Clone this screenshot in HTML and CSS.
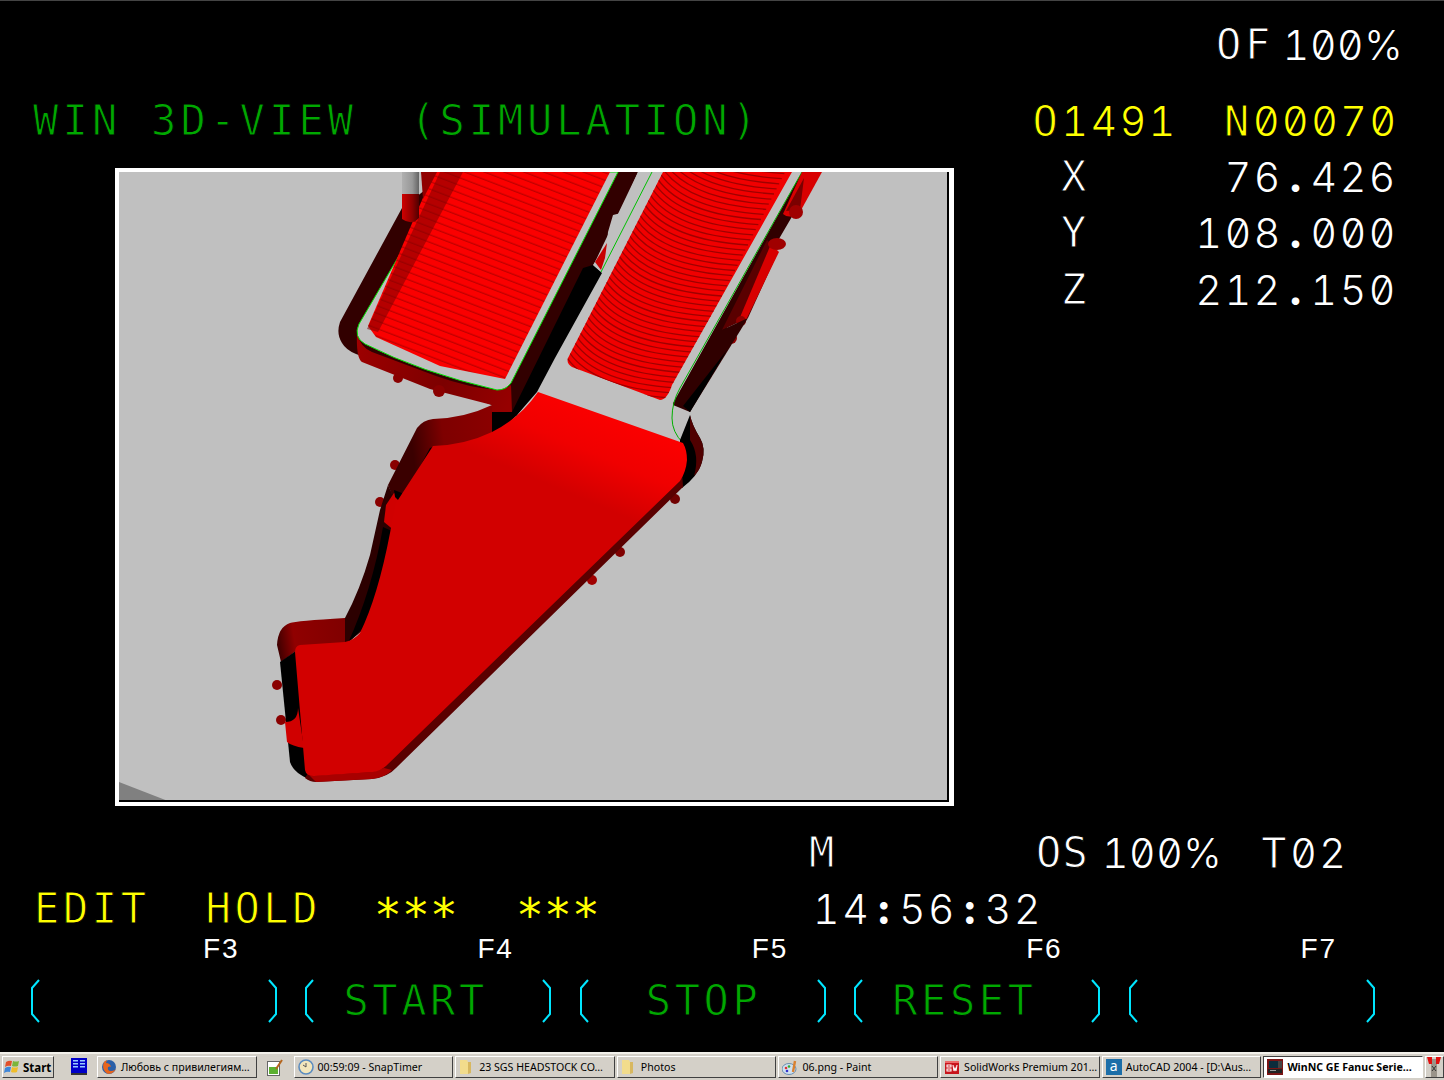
FILE: index.html
```html
<!DOCTYPE html>
<html lang="en">
<head>
    <meta charset="UTF-8">
    <title>WinNC GE Fanuc Series</title>
    <link rel="stylesheet" href="styles.css">
</head>
<body>

    <div class="screen">
        <div class="line line-top">
            <span class="white of-label">OF</span><span class="white of-value num">100%</span>
        </div>

        <div class="line line-title">
            <span class="green title">WIN 3D-VIEW</span><span class="green title-sub">(SIMULATION)</span>
            <span class="yellow prog">O<span class="num">1491</span></span><span class="yellow block">N<span class="num">00070</span></span>
        </div>

        <div class="middle">
            <div class="viewport">
                <svg class="sim" viewBox="119 172 828 628" width="828" height="628">
                    <defs>
                        <linearGradient id="floorGrad" gradientUnits="userSpaceOnUse" x1="625" y1="405" x2="585" y2="500">
                            <stop offset="0" stop-color="#ff0000"/>
                            <stop offset="0.55" stop-color="#f00000"/>
                            <stop offset="1" stop-color="#d20000"/>
                        </linearGradient>
                        <linearGradient id="wallBottom" gradientUnits="userSpaceOnUse" x1="350" y1="340" x2="510" y2="400">
                            <stop offset="0" stop-color="#a00000"/>
                            <stop offset="0.6" stop-color="#7c0000"/>
                            <stop offset="1" stop-color="#960000"/>
                        </linearGradient>
                        <linearGradient id="neckWall" gradientUnits="userSpaceOnUse" x1="410" y1="430" x2="490" y2="420">
                            <stop offset="0" stop-color="#3a0000"/>
                            <stop offset="0.4" stop-color="#7e0000"/>
                            <stop offset="1" stop-color="#8a0000"/>
                        </linearGradient>
                        <linearGradient id="stepWall" gradientUnits="userSpaceOnUse" x1="277" y1="640" x2="345" y2="630">
                            <stop offset="0" stop-color="#400000"/>
                            <stop offset="0.25" stop-color="#900000"/>
                            <stop offset="1" stop-color="#800000"/>
                        </linearGradient>
                        <linearGradient id="toolGrey" x1="0" y1="0" x2="1" y2="0">
                            <stop offset="0" stop-color="#b0b0b0"/>
                            <stop offset="0.6" stop-color="#989898"/>
                            <stop offset="1" stop-color="#646464"/>
                        </linearGradient>
                        <linearGradient id="toolRed" x1="0" y1="0" x2="1" y2="0">
                            <stop offset="0" stop-color="#d00000"/>
                            <stop offset="0.6" stop-color="#900000"/>
                            <stop offset="1" stop-color="#500000"/>
                        </linearGradient>
                        <!-- straight ribs of the left pocket -->
                        <pattern id="ribsFlat" patternUnits="userSpaceOnUse" width="40" height="7.1" patternTransform="rotate(21 440 270)">
                            <rect width="40" height="7.1" fill="#fa0000"/>
                            <rect y="5.8" width="40" height="1.3" fill="#c00000"/>
                        </pattern>
                        <clipPath id="roundPocket">
                            <path d="M663,172 L792,172 L672,385 Q667,400 660,400 L572,367 Q566,363 568,358 Z"/>
                        </clipPath>
                    </defs>

                    <!-- stock corner -->
                    <polygon points="119,782 168,801 119,801" fill="#808080"/>

                    <!-- outer walls, left pocket -->
                    <path d="M402,208 L340,322 Q336,334 342,343 Q346,350 356,354 L492,405 L492,432 L517,415 L530,398 L638,172 L448,172 Z" fill="#320000"/>
                    <path d="M357,333 Q360,347 372,352 L436,376 Q470,388 497,390 Q506,389 511,385 L512,412 L492,422 L492,405 L430,389 L362,362 Q356,358 357,333 Z" fill="url(#wallBottom)"/>
                    <polygon points="583,268 593,265 602,273 555,358 537,392 517,415 492,432 492,422 512,412" fill="#000"/>
                    <circle cx="398" cy="378" r="5" fill="#8a0000"/>
                    <circle cx="439" cy="391" r="6" fill="#8a0000"/>
                    <!-- green contour, left pocket -->
                    <path d="M448,172 L359,324 Q353,337 365,344 Q420,372 497,390 Q506,390 511,383 L618,172 Z" fill="#c0c0c0" stroke="#00e000" stroke-width="1"/>
                    <path d="M434,172 L368,326 L376,337 L440,366 L505,379 L610,172 Z" fill="url(#ribsFlat)"/>
                    <path d="M463,172 L378,332 L367,329 L440,172 Z" fill="#7c0000" opacity="0.55"/>

                    <!-- outer walls, right pocket -->
                    <polygon points="802,172 818,172 720,340 700,372 690,412 673,405 672,380" fill="#300000"/>
                    <!-- strip between the pockets -->
                    <polygon points="638,172 652,172 605,275 593,265 607,243 608,232 613,215 625,212 625,202" fill="#c0c0c0"/>
                    <polygon points="595,262 607,243 605,258 601,270" fill="#c80000"/>
                    <path d="M652,172 L601,272" stroke="#00c000" stroke-width="1" fill="none"/>
                    <!-- grey floor of the right pocket -->
                    <polygon points="660,172 802,172 672,405 672,430 683,443 538,392 552,368 609,275" fill="#c0c0c0"/>
                    <path d="M802,172 L680,388 Q672,402 672,418 Q672,432 683,443" stroke="#00b000" stroke-width="1" fill="none"/>
                    <!-- curved ribs of the right pocket -->
                    <g clip-path="url(#roundPocket)">
                        <rect x="560" y="172" width="240" height="230" fill="#f00000"/>
                        <path class="ribs" d="M567,358 q25,35 103,40 m-100.4,-45.1 q25,35 103,40 m-100.4,-45.1 q25,35 103,40 m-100.4,-45.1 q25,35 103,40 m-100.4,-45.1 q25,35 103,40 m-100.4,-45.1 q25,35 103,40 m-100.4,-45.1 q25,35 103,40 m-100.4,-45.1 q25,35 103,40 m-100.4,-45.1 q25,35 103,40 m-100.4,-45.1 q25,35 103,40 m-100.4,-45.1 q25,35 103,40 m-100.4,-45.1 q25,35 103,40 m-100.4,-45.1 q25,35 103,40 m-100.4,-45.1 q25,35 103,40 m-100.4,-45.1 q25,35 103,40 m-100.4,-45.1 q25,35 103,40 m-100.4,-45.1 q25,35 103,40 m-100.4,-45.1 q25,35 103,40 m-100.4,-45.1 q25,35 103,40 m-100.4,-45.1 q25,35 103,40 m-100.4,-45.1 q25,35 103,40 m-100.4,-45.1 q25,35 103,40 m-100.4,-45.1 q25,35 103,40 m-100.4,-45.1 q25,35 103,40 m-100.4,-45.1 q25,35 103,40 m-100.4,-45.1 q25,35 103,40 m-100.4,-45.1 q25,35 103,40 m-100.4,-45.1 q25,35 103,40 m-100.4,-45.1 q25,35 103,40 m-100.4,-45.1 q25,35 103,40 m-100.4,-45.1 q25,35 103,40 m-100.4,-45.1 q25,35 103,40 m-100.4,-45.1 q25,35 103,40 m-100.4,-45.1 q25,35 103,40 m-100.4,-45.1 q25,35 103,40 m-100.4,-45.1 q25,35 103,40 m-100.4,-45.1 q25,35 103,40 m-100.4,-45.1 q25,35 103,40 m-100.4,-45.1 q25,35 103,40 m-100.4,-45.1 q25,35 103,40 m-100.4,-45.1 q25,35 103,40 m-100.4,-45.1 q25,35 103,40 m-100.4,-45.1 q25,35 103,40 m-100.4,-45.1 q25,35 103,40 m-100.4,-45.1 q25,35 103,40 m-100.4,-45.1 q25,35 103,40"/>
                    </g>

                    <!-- grooves on the right wall -->
                    <path d="M802,172 L822,172 L800,212 Q790,220 783,214 Z" fill="#d80000"/>
                    <path d="M786,211 L804,178 L800,210 Z" fill="#7a0000"/>
                    <circle cx="796" cy="212" r="7" fill="#a00000"/>
                    <polygon points="767,240 722,330 748,318 778,252" fill="#5a0000"/>
                    <polygon points="771,244 779,252 746,320 738,322" fill="#d80000"/>
                    <ellipse cx="777" cy="244" rx="9" ry="6" fill="#a00000"/>
                    <circle cx="741" cy="321" r="5" fill="#900000"/>
                    <circle cx="731" cy="338" r="6" fill="#900000"/>
                    <polygon points="722,330 748,318 690,412 680,400" fill="#300000"/>
                    <polygon points="727,350 690,412 683,406" fill="#000"/>
                    <path d="M690,415 Q692,425 700,438 Q706,448 702,462 Q698,476 682,488 L680,455 Q680,447 680,440 Z" fill="#000"/>
                    <path d="M690,415 Q692,425 700,438 Q706,448 702,462 Q700,470 694,476 Q700,455 690,440 Z" fill="#500000"/>

                    <!-- neck wall above the big floor -->
                    <circle cx="395" cy="465" r="5" fill="#8a0000"/>
                    <circle cx="380" cy="502" r="5" fill="#8a0000"/>
                    <path d="M388,485 L417,428 Q423,420 433,419 Q465,418 492,405 L492,442 Q465,453 435,454 L412,485 L396,505 Z" fill="url(#neckWall)"/>
                    <polygon points="492,412 512,412 517,415 492,440" fill="#000"/>
                    <polygon points="430,448 410,485 400,500 406,503 436,446" fill="#000"/>
                    <!-- left edge of the big floor -->
                    <path d="M388,485 L380,510 L370,555 Q360,590 345,618 L345,645 L375,620 L400,533 L395,500 Z" fill="#2c0000"/>
                    <path d="M348,643 L366,625 L396,533 L383,527 Q372,590 348,643 Z" fill="#000"/>
                    <path d="M394,493 L386,505 L384,522 L396,532 L410,500 Z" fill="#d00000"/>
                    <polygon points="395,497 394,490 402,493 403,505" fill="#000"/>

                    <!-- step wall at the lower left -->
                    <circle cx="277" cy="685" r="5" fill="#8a0000"/>
                    <circle cx="281" cy="720" r="5" fill="#8a0000"/>
                    <path d="M277,645 Q278,627 290,623 Q296,621 345,618 L345,645 L300,648 L281,662 Z" fill="url(#stepWall)"/>
                    <path d="M280,662 L300,648 L312,780 Q294,774 290,762 Z" fill="#000"/>
                    <path d="M285,722 Q298,722 298,708 L304,748 Q292,746 287,742 Z" fill="#d00000"/>

                    <!-- lip along the big floor -->
                    <circle cx="620" cy="552" r="5" fill="#800000"/>
                    <circle cx="592" cy="580" r="5" fill="#a00000"/>
                    <circle cx="675" cy="499" r="5" fill="#700000"/>
                    <path d="M683,487 L396,768 Q388,777 372,779 L316,782 Q310,782 305,778 L310,770 L372,766 L383,760 L682,472 Z" fill="#5a0000"/>
                    <path d="M310,776 L372,772 L384,768 L392,770 Q386,777 372,779 L316,782 Z" fill="#a80000"/>

                    <!-- big floor -->
                    <path d="M538,392 L683,443 Q687,450 687,460 Q686,472 680,481 L386,766 Q380,771 373,772 L314,776 Q306,776 305,770 L295,652 Q295,646 300,645 L345,642 Q354,640 360,633 Q378,596 390,533 L396,503 L433,446 Q465,445 492,432 Q520,418 538,392 Z" fill="url(#floorGrad)"/>

                    <!-- tool -->
                    <rect x="402" y="172" width="17" height="22" fill="url(#toolGrey)"/>
                    <path d="M402,194 H419 V218 Q412,226 402,219 Z" fill="url(#toolRed)"/>
                    <path d="M421,172 H437 L423,199 Z" fill="#900000"/>
                </svg>
            </div>
            <div class="readout">
                <div class="axis"><span>X</span><span class="num">76<span class="sep">.</span>426</span></div>
                <div class="axis"><span>Y</span><span class="num">108<span class="sep">.</span>000</span></div>
                <div class="axis"><span>Z</span><span class="num">212<span class="sep">.</span>150</span></div>
            </div>
        </div>

        <div class="line line-mode">
            <span class="white mode-m">M</span><span class="white mode-os">OS</span><span class="white mode-pct num">100%</span><span class="white mode-tool">T<span class="num">02</span></span>
        </div>

        <div class="line line-status">
            <span class="yellow st-edit">EDIT</span><span class="yellow st-hold">HOLD</span><span class="yellow stars st-star">***</span><span class="yellow stars st-star2">***</span><span class="white st-time num">14<span class="sep">:</span>56<span class="sep">:</span>32</span>
        </div>

        <div class="fkeys">
            <span>F3</span><span>F4</span><span>F5</span><span>F6</span><span>F7</span>
        </div>

        <div class="softkeys">
            <div class="softkey">
                <svg class="bracket" viewBox="0 0 9 44" width="9" height="44"><path d="M8,1 L1,9 V35 L8,43"/></svg>
                <span class="softkey-label"></span>
                <svg class="bracket" viewBox="0 0 9 44" width="9" height="44"><path d="M1,1 L8,9 V35 L1,43"/></svg>
            </div>
            <div class="softkey">
                <svg class="bracket" viewBox="0 0 9 44" width="9" height="44"><path d="M8,1 L1,9 V35 L8,43"/></svg>
                <span class="softkey-label">START</span>
                <svg class="bracket" viewBox="0 0 9 44" width="9" height="44"><path d="M1,1 L8,9 V35 L1,43"/></svg>
            </div>
            <div class="softkey">
                <svg class="bracket" viewBox="0 0 9 44" width="9" height="44"><path d="M8,1 L1,9 V35 L8,43"/></svg>
                <span class="softkey-label label-stop">STOP</span>
                <svg class="bracket" viewBox="0 0 9 44" width="9" height="44"><path d="M1,1 L8,9 V35 L1,43"/></svg>
            </div>
            <div class="softkey">
                <svg class="bracket" viewBox="0 0 9 44" width="9" height="44"><path d="M8,1 L1,9 V35 L8,43"/></svg>
                <span class="softkey-label">RESET</span>
                <svg class="bracket" viewBox="0 0 9 44" width="9" height="44"><path d="M1,1 L8,9 V35 L1,43"/></svg>
            </div>
            <div class="softkey">
                <svg class="bracket" viewBox="0 0 9 44" width="9" height="44"><path d="M8,1 L1,9 V35 L8,43"/></svg>
                <span class="softkey-label"></span>
                <svg class="bracket" viewBox="0 0 9 44" width="9" height="44"><path d="M1,1 L8,9 V35 L1,43"/></svg>
            </div>
        </div>
    </div>

    <div class="taskbar">
        <div class="task start">
            <svg width="18" height="16" viewBox="0 0 18 16"><path d="M2,3 Q5,1 8,2 L7,7 Q4,6 1,8 Z" fill="#e2502a"/><path d="M9,2 Q12,3 15,2 L14,7 Q11,8 8,7 Z" fill="#7cb53a"/><path d="M1,9 Q4,7 7,8 L6,13 Q3,12 0,14 Z" fill="#3f86d8"/><path d="M8,8 Q11,9 14,8 L13,13 Q10,14 7,13 Z" fill="#f0bd2a"/></svg>
            <span>Start</span>
        </div>
        <div class="quick ql-book">
            <svg width="16" height="18" viewBox="0 0 16 18"><rect x="0" y="0" width="16" height="15" fill="#0000c8"/><rect x="2" y="2" width="5" height="1.5" fill="#9cf"/><rect x="2" y="5" width="5" height="1.5" fill="#9cf"/><rect x="2" y="8" width="5" height="1.5" fill="#9cf"/><rect x="9" y="2" width="5" height="1.5" fill="#9cf"/><rect x="9" y="5" width="5" height="1.5" fill="#9cf"/><rect x="9" y="8" width="5" height="1.5" fill="#9cf"/><rect x="0" y="15" width="16" height="2" fill="#333"/></svg>
        </div>
        <div class="task">
            <svg width="16" height="16" viewBox="0 0 16 16"><circle cx="8" cy="8" r="7" fill="#2a5fa8"/><path d="M3,3 Q0,10 6,14.5 Q12,16 15.5,9 Q14,12 10,12 Q6,12 7,8 Q9,7 10,8 Q9,4 5,4 L6,1 Q4,2 3,3 Z" fill="#e8651c"/></svg>
            <span>Любовь с привилегиям…</span>
        </div>
        <div class="quick ql-note">
            <svg width="17" height="17" viewBox="0 0 17 17"><rect x="0.5" y="2.5" width="12" height="14" fill="#fff" stroke="#666"/><rect x="2" y="8" width="9" height="7" fill="#5cb030"/><path d="M9,10 L15,1" stroke="#b5651d" stroke-width="2"/></svg>
        </div>
        <div class="task">
            <svg width="16" height="16" viewBox="0 0 16 16"><circle cx="8" cy="8" r="7" fill="#f3e6bc" stroke="#5b8cc0" stroke-width="1.6"/><path d="M8,4 V8 L5,6" stroke="#555" stroke-width="1" fill="none"/></svg>
            <span>00:59:09 - SnapTimer</span>
        </div>
        <div class="task">
            <svg width="16" height="16" viewBox="0 0 16 16"><path d="M1,1 H8 L9,3 V15 H1 Z" fill="#f2dc8c"/><path d="M9,3 H12 V14 L9,15 Z" fill="#d8b860"/></svg>
            <span>23 SGS HEADSTOCK CO…</span>
        </div>
        <div class="task">
            <svg width="16" height="16" viewBox="0 0 16 16"><path d="M1,1 H8 L9,3 V15 H1 Z" fill="#f2dc8c"/><path d="M9,3 H12 V14 L9,15 Z" fill="#d8b860"/></svg>
            <span>Photos</span>
        </div>
        <div class="task">
            <svg width="16" height="16" viewBox="0 0 16 16"><ellipse cx="7" cy="10" rx="7" ry="5.5" fill="#cfe0f0" stroke="#6a8fb0"/><circle cx="4" cy="9" r="1.3" fill="#d33"/><circle cx="7" cy="7.5" r="1.3" fill="#3a3"/><circle cx="5" cy="12" r="1.3" fill="#33c"/><path d="M11,13 L13,2" stroke="#d98030" stroke-width="2.4"/></svg>
            <span>06.png - Paint</span>
        </div>
        <div class="task">
            <svg width="16" height="16" viewBox="0 0 16 16"><rect x="1" y="2" width="14" height="13" fill="#c8141c"/><rect x="1" y="2" width="14" height="2" fill="#ee6a6a"/><path d="M3,6 H7 V8 H3 Z M3,10 H7 V12 H3 Z M9,6 L10,12 L11,9 L12,12 L13,6" fill="none" stroke="#fff" stroke-width="1.1"/></svg>
            <span>SolidWorks Premium 201…</span>
        </div>
        <div class="task">
            <div class="acad-icon">a</div>
            <span>AutoCAD 2004 - [D:\Aus…</span>
        </div>
        <div class="task active">
            <svg width="16" height="16" viewBox="0 0 16 16"><rect width="16" height="16" fill="#7a1414"/><rect x="2" y="2" width="9" height="7" fill="#0c2c3c"/><rect x="11" y="2" width="4" height="7" fill="#444"/><rect x="1" y="10" width="14" height="4" fill="#222"/><rect x="3" y="11" width="6" height="1" fill="#9a9a9a"/></svg>
            <span>WinNC GE Fanuc Serie…</span>
        </div>
        <div class="task tail">
            <svg width="14" height="20" viewBox="0 0 14 20"><rect x="4" y="2" width="6" height="18" fill="#9a948a"/><path d="M0,0 H5 V7 H2 Z M9,0 H14 L12,7 H9 Z" fill="#e01010"/><path d="M5,9 L9,14 M9,9 L5,14" stroke="#333"/></svg>
        </div>
    </div>

</body>
</html>
```

FILE: styles.css
```css
/* Basic reset and body styling */
* {
    margin: 0;
    padding: 0;
    box-sizing: border-box;
}

body {
    width: 1444px;
    height: 1080px;
    background-color: #000;
    overflow: hidden;
    font-family: 'DejaVu Sans Mono', monospace;
}

/* CNC screen, one text grid on black */
.screen {
    height: 1052px;
    border-top: 1px solid #444;
    font-size: 42px;
    letter-spacing: 3.6px;
    -webkit-text-stroke: 1px #000;
}

.line {
    display: flex;
    white-space: pre;
    line-height: 40px;
    height: 40px;
}

.white { color: #fff; }
.yellow { color: #ffff00; }
.green { color: #00a800; }

/* Digit runs: thin face with the slashed zero of the real screen */
.num {
    font-family: 'Inter', sans-serif;
    font-weight: 300;
    font-size: 41px;
    letter-spacing: 2.6px;
    font-feature-settings: "zero", "tnum";
    -webkit-text-stroke: 0;
}

/* Dots and colons sit in a full cell and are heavy */
.sep {
    font-weight: 800;
    margin: 0 7px;
}

/* Top rows */
.line-top {
    margin-top: 24px;
    padding-left: 1216px;
}

.of-value { margin-left: 9px; letter-spacing: 0.6px; }

.line-title { margin-top: 36px; padding-left: 33px; }
.title { letter-spacing: 4.2px; }
.title-sub { margin-left: 53px; letter-spacing: 3.9px; }
.prog { margin-left: 272px; }
.block { margin-left: 46px; }

/* Viewport and axis readouts */
.middle {
    display: flex;
    margin-top: 27px;
    height: 638px;
}

.viewport {
    margin-left: 115px;
    width: 839px;
    height: 638px;
    background-color: #fff;
    padding: 4px 5px 4px 4px;
}

.sim {
    display: block;
    box-sizing: content-box;
    background-color: #c0c0c0;
    border-right: 2px solid #000;
    border-bottom: 2px solid #000;
}

.ribs {
    fill: none;
    stroke: #a00000;
    stroke-width: 1.3;
}

.readout {
    width: 340px;
    margin-left: 107px;
    margin-top: -11px;
}

.axis {
    display: flex;
    justify-content: space-between;
    color: #fff;
    height: 56.4px;
    line-height: 40px;
    width: 337px;
}

/* Status rows */
.line-mode { margin-top: 27px; padding-left: 809px; }
.mode-os { margin-left: 198px; letter-spacing: 1.2px; }
.mode-pct { margin-left: 13px; letter-spacing: 0.6px; }
.mode-tool { margin-left: 39px; }

.line-status { margin-top: 16px; padding-left: 34px; }
.st-hold { margin-left: 56px; }
.stars {
    font-size: 46px;
    letter-spacing: 0.3px;
    margin-top: 6px;
    -webkit-text-stroke: 0;
}
.st-star { margin-left: 53px; }
.st-star2 { margin-left: 58px; }
.st-time { margin-left: 213px; }

/* Function key row */
.fkeys {
    display: flex;
    margin-top: 5px;
    padding-left: 203px;
    font-family: 'Liberation Sans', sans-serif;
    font-size: 28px;
    letter-spacing: 1.8px;
    line-height: 30px;
    height: 30px;
    color: #fff;
    -webkit-text-stroke: 0;
}

.fkeys span {
    flex: 0 0 274.4px;
}

.fkeys span:last-child {
    flex: none;
}

/* Soft keys, brackets around the green label */
.softkeys {
    display: flex;
    margin-top: 15px;
    padding-left: 31px;
    gap: 28.4px;
}

.softkey {
    display: flex;
    align-items: center;
    width: 246px;
    height: 44px;
}

.softkey-label {
    flex: 1;
    padding-left: 29px;
    color: #00a800;
    line-height: 44px;
    white-space: pre;
}

.label-stop { padding-left: 57px; }

.bracket {
    flex: 0 0 9px;
    fill: none;
    stroke: #00e6ff;
    stroke-width: 2;
}

/* Taskbar */
.taskbar {
    display: flex;
    align-items: flex-start;
    height: 28px;
    padding: 2px 0 2px 2px;
    gap: 2px;
    background-color: #d4d0c8;
    border-top: 2px solid #f2f0ea;
    font-family: 'Noto Sans', sans-serif;
    font-size: 10.6px;
    color: #000;
}

.task {
    display: flex;
    align-items: center;
    gap: 4px;
    width: 160px;
    height: 22px;
    padding: 0 3px;
    border: 1px solid;
    border-color: #fff #404040 #404040 #fff;
    white-space: nowrap;
    overflow: hidden;
}

.task svg,
.acad-icon {
    flex-shrink: 0;
}

.task.start {
    width: 52px;
    padding: 0 1px;
    gap: 1px;
    font-size: 11.5px;
    font-weight: bold;
}

.task.active {
    background-color: #fff;
    font-weight: bold;
    border-color: #404040 #fff #fff #404040;
}

.task.tail {
    width: 19px;
    padding: 0 1px;
}

.quick {
    display: flex;
    align-items: center;
    height: 22px;
}

.ql-book { margin: 0 8px 0 15px; }
.ql-note { margin: 0 8px; }

.acad-icon {
    width: 16px;
    height: 16px;
    background-color: #1c6ea8;
    color: #fff;
    font-size: 14px;
    line-height: 14px;
    text-align: center;
}
```
